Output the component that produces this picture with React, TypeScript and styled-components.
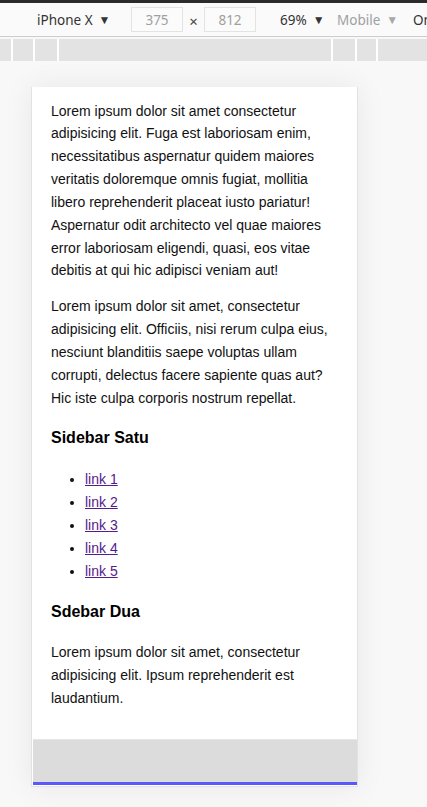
import React from 'react';
import styled, { createGlobalStyle } from 'styled-components';

const GlobalStyle = createGlobalStyle`
  html, body {
    margin: 0;
    padding: 0;
    background: #f8f8f8;
  }
  * {
    box-sizing: border-box;
  }
`;

const Screen = styled.div`
  width: 427px;
  height: 807px;
  overflow: hidden;
  display: flex;
  flex-direction: column;
  background: #f8f8f8;
`;

const TopStrip = styled.div`
  height: 3px;
  background: #2b2b2b;
  flex-shrink: 0;
`;

const Toolbar = styled.div`
  height: 34px;
  flex-shrink: 0;
  display: flex;
  align-items: center;
  padding-left: 37px;
  background: #fafafa;
  border-bottom: 1px solid #cdcdcd;
  font-family: 'Noto Sans', 'Open Sans', sans-serif;
  font-size: 13.5px;
  white-space: nowrap;
  overflow: hidden;
`;

const ToolItem = styled.div<{ $w: number; $muted?: boolean }>`
  width: ${(p) => p.$w}px;
  flex-shrink: 0;
  color: ${(p) => (p.$muted ? '#a0a0a0' : '#333')};
  display: flex;
  align-items: center;
`;

const Caret = styled.span<{ $muted?: boolean }>`
  font-size: 12px;
  margin-left: 6px;
  color: ${(p) => (p.$muted ? '#a8a8a8' : '#333')};
`;

const DimInput = styled.div`
  width: 52px;
  height: 25px;
  flex-shrink: 0;
  border: 1px solid #e3e3e3;
  background: #fbfbfb;
  color: #a0a0a0;
  display: flex;
  align-items: center;
  justify-content: center;
`;

const Times = styled.div`
  width: 21px;
  flex-shrink: 0;
  text-align: center;
  color: #444;
  font-size: 15px;
  padding-top: 3px;
`;

const Spacer = styled.div<{ $w: number }>`
  width: ${(p) => p.$w}px;
  flex-shrink: 0;
`;

const Ruler = styled.div`
  height: 22px;
  margin-top: 2px;
  flex-shrink: 0;
  display: flex;
  background: #ffffff;
  gap: 2px;
`;

const RulerBar = styled.div<{ $w?: number }>`
  background: #e3e3e3;
  ${(p) => (p.$w ? `width: ${p.$w}px; flex-shrink: 0;` : 'flex: 1;')}
`;

const Stage = styled.div`
  flex: 1;
  padding: 26px 0 0 31px;
  background: #f8f8f8;
`;

const Device = styled.div`
  width: 327px;
  background: #ffffff;
  border: 1px solid #e2e2e2;
  border-top: none;
  padding: 0 0 1px 1px;
  box-shadow: 0 0 28px rgba(0, 0, 0, 0.07);
`;

const Content = styled.main`
  padding: 12.5px 18px 29px 18px;
  font-family: 'Liberation Sans', Arial, sans-serif;
  font-size: 14px;
  line-height: 22.85px;
  color: #111;
`;

const Paragraph = styled.p`
  margin: 0;
  & + & {
    margin-top: 13px;
  }
`;

const SideTitle = styled.h3`
  margin: 18px 0;
  font-size: 16px;
  font-weight: bold;
  line-height: 22.85px;
  color: #000;
`;

const LinkList = styled.ul`
  margin: 0;
  padding-left: 34px;
`;

const LinkItem = styled.li`
  line-height: 22.85px;
`;

const Link = styled.a`
  color: #551a8b;
  text-decoration: underline;
`;

const Footer = styled.footer`
  height: 46px;
  background: #dcdcdc;
  border-top: 1px solid #e6e6e6;
  border-bottom: 3px solid #5959fb;
`;

const rulerBars = [11, 20, 22, 272, 22, 19];

const App: React.FC = () => {
  return (
    <>
      <GlobalStyle />
      <Screen>
        <TopStrip />
        <Toolbar>
          <ToolItem $w={94}>
            iPhone X<Caret>▼</Caret>
          </ToolItem>
          <DimInput>375</DimInput>
          <Times>×</Times>
          <DimInput>812</DimInput>
          <Spacer $w={24} />
          <ToolItem $w={57}>
            69%<Caret>▼</Caret>
          </ToolItem>
          <ToolItem $w={76} $muted>
            Mobile<Caret $muted>▼</Caret>
          </ToolItem>
          <ToolItem $w={40}>Online</ToolItem>
        </Toolbar>
        <Ruler>
          {rulerBars.map((w, i) => (
            <RulerBar key={i} $w={w} />
          ))}
          <RulerBar />
        </Ruler>
        <Stage>
          <Device>
            <Content>
              <Paragraph>
                Lorem ipsum dolor sit amet consectetur adipisicing elit. Fuga est laboriosam enim,
                necessitatibus aspernatur quidem maiores veritatis doloremque omnis fugiat, mollitia
                libero reprehenderit placeat iusto pariatur! Aspernatur odit architecto vel quae
                maiores error laboriosam eligendi, quasi, eos vitae debitis at qui hic adipisci
                veniam aut!
              </Paragraph>
              <Paragraph>
                Lorem ipsum dolor sit amet, consectetur adipisicing elit. Officiis, nisi rerum culpa
                eius, nesciunt blanditiis saepe voluptas ullam corrupti, delectus facere sapiente
                quas aut? Hic iste culpa corporis nostrum repellat.
              </Paragraph>
              <SideTitle>Sidebar Satu</SideTitle>
              <LinkList>
                {[1, 2, 3, 4, 5].map((n) => (
                  <LinkItem key={n}>
                    <Link href="#">link {n}</Link>
                  </LinkItem>
                ))}
              </LinkList>
              <SideTitle>Sdebar Dua</SideTitle>
              <Paragraph>
                Lorem ipsum dolor sit amet, consectetur adipisicing elit. Ipsum reprehenderit est
                laudantium.
              </Paragraph>
            </Content>
            <Footer />
          </Device>
        </Stage>
      </Screen>
    </>
  );
};

export default App;
